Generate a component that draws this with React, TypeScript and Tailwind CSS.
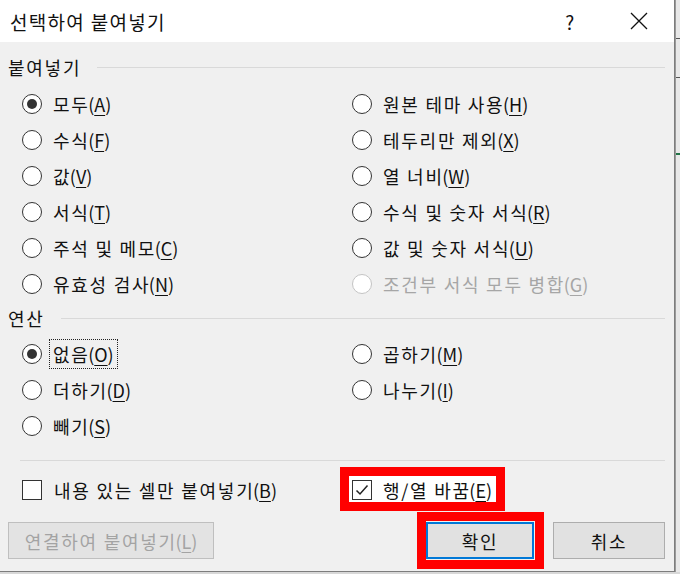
import React from 'react';

type Opt = { label: string; key: string; checked?: boolean; disabled?: boolean; focus?: boolean };

function Radio({ checked, disabled }: { checked?: boolean; disabled?: boolean }) {
  return (
    <span
      className={`flex h-[20px] w-[20px] shrink-0 items-center justify-center rounded-full border-[1.5px] bg-white ${
        disabled ? 'border-[#c4c4c4]' : 'border-[#333333]'
      }`}
    >
      {checked && <span className="h-[10px] w-[10px] rounded-full bg-[#333333]" />}
    </span>
  );
}

function Label({ label, k }: { label: string; k: string }) {
  return (
    <span className="whitespace-nowrap">
      {label}
      <span className="ml-[-1.5px] tracking-normal">
        (<span className="underline underline-offset-[3px]">{k}</span>)
      </span>
    </span>
  );
}

function RadioRow({ opt }: { opt: Opt }) {
  return (
    <div className={`flex h-[36px] items-center ${opt.disabled ? 'text-[#a6a6a6]' : 'text-[#111111]'}`}>
      <Radio checked={opt.checked} disabled={opt.disabled} />
      {opt.focus ? (
        <span className="ml-[7px] flex h-[30px] items-center border border-dotted border-[#222222] px-[3px]">
          <Label label={opt.label} k={opt.key} />
        </span>
      ) : (
        <span className="ml-[11px]">
          <Label label={opt.label} k={opt.key} />
        </span>
      )}
    </div>
  );
}

function Section({ title }: { title: string }) {
  return (
    <div className="flex h-[24px] items-center">
      <span className="text-[#111111]">{title}</span>
      <div className="ml-[16px] h-px flex-1 bg-[#d9d9d9]" />
    </div>
  );
}

const pasteLeft: Opt[] = [
  { label: '모두', key: 'A', checked: true },
  { label: '수식', key: 'F' },
  { label: '값', key: 'V' },
  { label: '서식', key: 'T' },
  { label: '주석 및 메모', key: 'C' },
  { label: '유효성 검사', key: 'N' },
];

const pasteRight: Opt[] = [
  { label: '원본 테마 사용', key: 'H' },
  { label: '테두리만 제외', key: 'X' },
  { label: '열 너비', key: 'W' },
  { label: '수식 및 숫자 서식', key: 'R' },
  { label: '값 및 숫자 서식', key: 'U' },
  { label: '조건부 서식 모두 병합', key: 'G', disabled: true },
];

const opLeft: Opt[] = [
  { label: '없음', key: 'O', checked: true, focus: true },
  { label: '더하기', key: 'D' },
  { label: '빼기', key: 'S' },
];

const opRight: Opt[] = [
  { label: '곱하기', key: 'M' },
  { label: '나누기', key: 'I' },
];

function Checkbox({ checked }: { checked?: boolean }) {
  return (
    <span className="flex h-[20px] w-[20px] shrink-0 items-center justify-center border-[1.5px] border-[#333333] bg-white">
      {checked && (
        <svg width="16" height="16" viewBox="0 0 16 16" fill="none">
          <path d="M2.5 8.5 L6 12 L13.5 3.5" stroke="#222222" strokeWidth="1.5" />
        </svg>
      )}
    </span>
  );
}

export default function App() {
  return (
    <div className="flex h-[574px] w-[680px] flex-col bg-[#e6e6e6] font-['Noto_Sans_CJK_KR',sans-serif] text-[18px] leading-none tracking-[1.75px]">
      <div className="flex h-[572px]">
        <div className="flex w-[675px] flex-col border-r border-b border-[#7d7d7d] bg-[#f0f0f0]">
          {/* Title bar */}
          <div className="flex h-[42px] shrink-0 items-center bg-white pl-[10px]">
            <span className="text-[19px] tracking-[1.3px] text-[#111111]">선택하여 붙여넣기</span>
            <span className="ml-auto mr-[54px] text-[19px] text-[#111111]">?</span>
            <svg className="mr-[26px]" width="18" height="18" viewBox="0 0 18 18">
              <path d="M1 1 L17 17 M17 1 L1 17" stroke="#111111" strokeWidth="1.3" />
            </svg>
          </div>

          <div className="flex flex-col pl-[8px] pr-[9px]">
            {/* Paste section */}
            <div className="mt-[13px]">
              <Section title="붙여넣기" />
            </div>
            <div className="mt-[7px] grid grid-cols-[330px_1fr] pl-[14px]">
              <div>
                {pasteLeft.map((o) => (
                  <RadioRow key={o.key} opt={o} />
                ))}
              </div>
              <div>
                {pasteRight.map((o) => (
                  <RadioRow key={o.key} opt={o} />
                ))}
              </div>
            </div>

            {/* Operation section */}
            <div className="mt-[4px]">
              <Section title="연산" />
            </div>
            <div className="mt-[6px] grid grid-cols-[330px_1fr] pl-[14px]">
              <div>
                {opLeft.map((o) => (
                  <RadioRow key={o.key} opt={o} />
                ))}
              </div>
              <div>
                {opRight.map((o) => (
                  <RadioRow key={o.key} opt={o} />
                ))}
              </div>
            </div>

            <div className="ml-[12px] mt-[16px] h-px bg-[#d9d9d9]" />

            {/* Checkboxes */}
            <div className="mt-[11px] grid h-[36px] grid-cols-[330px_1fr] pl-[14px] text-[#111111]">
              <div className="flex items-center">
                <Checkbox />
                <span className="ml-[12px]">
                  <Label label="내용 있는 셀만 붙여넣기" k="B" />
                </span>
              </div>
              <div className="relative flex items-center">
                <div className="absolute left-[-12px] top-[-5px] h-[44px] w-[165px] border-[9px] border-[#ff0000] bg-white" />
                <div className="relative flex items-center">
                  <Checkbox checked />
                  <span className="ml-[11px]">
                    <Label label="행/열 바꿈" k="E" />
                  </span>
                </div>
              </div>
            </div>

            {/* Buttons */}
            <div className="mt-[14px] flex h-[37px] items-stretch">
              <div className="flex w-[206px] items-center justify-center border border-[#bfbfbf] bg-[#e3e3e3] text-[#a3a3a3]">
                <Label label="연결하여 붙여넣기" k="L" />
              </div>
              <div className="relative ml-auto w-[108px]">
                <div className="absolute left-[-9px] right-[-10px] top-[-10px] bottom-[-10px] border-[9px] border-[#ff0000]" />
                <div className="relative flex h-full items-center justify-center border-2 border-[#0078d7] bg-[#e1e1e1] text-[#111111]">
                  확인
                </div>
              </div>
              <div className="ml-[19px] flex w-[112px] items-center justify-center border border-[#adadad] bg-[#e1e1e1] text-[#111111]">
                취소
              </div>
            </div>
          </div>
        </div>
        {/* sliver of the sheet behind */}
        <div className="flex flex-1 flex-col border-l border-[#9a9a9a] bg-[#e8e8e8]">
          <div className="h-[39px] border-b border-[#555555]" />
          <div className="h-[39px] border-b border-[#555555]" />
          <div className="h-[77px] border-b-2 border-[#217346]" />
        </div>
      </div>
      <div className="h-[2px] bg-[#d8d8d8]" />
    </div>
  );
}
